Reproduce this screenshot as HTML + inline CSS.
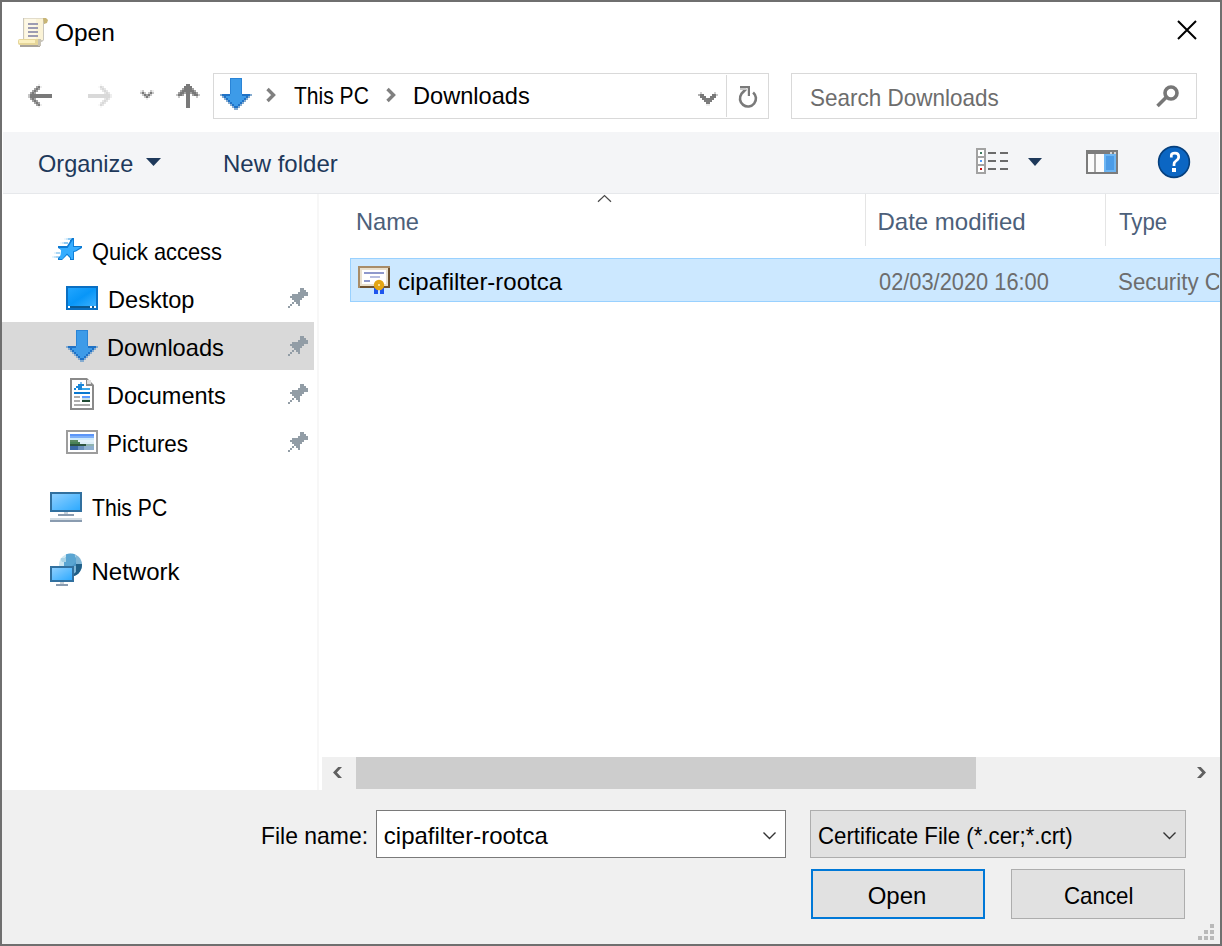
<!DOCTYPE html>
<html><head><meta charset="utf-8">
<style>
*{box-sizing:border-box}
html,body{margin:0;padding:0;width:1222px;height:946px;overflow:hidden;background:#fff}
body{position:relative;font-family:"Liberation Sans",sans-serif;font-size:24px;color:#000}
.a{position:absolute}
.t{position:absolute;white-space:nowrap;line-height:24px;font-size:24px;transform-origin:0 0}
#frame{position:absolute;left:0;top:0;width:1222px;height:946px;border:2px solid #6f6f6f;pointer-events:none}
svg{position:absolute;overflow:visible}
</style></head><body>

<!-- command bar -->
<div class="a" style="left:3px;top:132px;width:1216px;height:61px;background:#f4f5f7"></div>
<div class="a" style="left:3px;top:193px;width:1216px;height:1px;background:#e6e8eb"></div>

<!-- bottom pane -->
<div class="a" style="left:2px;top:790px;width:1218px;height:154px;background:#f0f0f0"></div>

<!-- nav pane separator -->
<div class="a" style="left:317px;top:194px;width:2px;height:596px;background:#f7f7f7"></div>

<!-- selected nav item -->
<div class="a" style="left:2px;top:322px;width:312px;height:48px;background:#d9d9d9"></div>

<!-- scrollbar -->
<div class="a" style="left:322px;top:757px;width:898px;height:33px;background:#f0f0f0"></div>
<div class="a" style="left:356px;top:757px;width:620px;height:32px;background:#cdcdcd"></div>

<!-- address box -->
<div class="a" style="left:213px;top:73px;width:556px;height:46px;border:1px solid #d9d9d9"></div>
<div class="a" style="left:726px;top:75px;width:1px;height:42px;background:#d9d9d9"></div>
<!-- search box -->
<div class="a" style="left:791px;top:73px;width:406px;height:46px;border:1px solid #d9d9d9"></div>

<!-- file row selection -->
<div class="a" style="left:350px;top:258px;width:880px;height:44px;background:#cce8ff;border:1px solid #99d1ff"></div>

<!-- column dividers -->
<div class="a" style="left:865px;top:194px;width:1px;height:52px;background:#e5e5e5"></div>
<div class="a" style="left:1105px;top:194px;width:1px;height:52px;background:#e5e5e5"></div>

<!-- bottom controls -->
<div class="a" style="left:376px;top:810px;width:410px;height:48px;background:#fff;border:1px solid #7a7a7a"></div>
<div class="a" style="left:810px;top:810px;width:376px;height:48px;background:#e1e1e1;border:1px solid #adadad"></div>
<div class="a" style="left:811px;top:869px;width:174px;height:50px;background:#e1e1e1;border:2px solid #0078d7"></div>
<div class="a" style="left:1011px;top:869px;width:174px;height:50px;background:#e1e1e1;border:1px solid #adadad"></div>

<!-- texts -->
<div class="t" style="left:54.8px;top:21px;transform:scaleX(1.018)">Open</div>
<div class="t" style="left:294.3px;top:84px;transform:scaleX(0.877)">This PC</div>
<div class="t" style="left:413.0px;top:84px;transform:scaleX(0.983)">Downloads</div>
<div class="t" style="left:810.3px;top:86px;transform:scaleX(0.937);color:#6d6d6d">Search Downloads</div>
<div class="t" style="left:37.9px;top:152px;transform:scaleX(0.980);color:#1e395b">Organize</div>
<div class="t" style="left:223.0px;top:152px;color:#1e395b">New folder</div>
<div class="t" style="left:92.0px;top:240px;transform:scaleX(0.910)">Quick access</div>
<div class="t" style="left:107.5px;top:288px;transform:scaleX(0.982)">Desktop</div>
<div class="t" style="left:106.8px;top:336px;transform:scaleX(0.984)">Downloads</div>
<div class="t" style="left:106.8px;top:384px;transform:scaleX(0.979)">Documents</div>
<div class="t" style="left:106.9px;top:432px;transform:scaleX(0.935)">Pictures</div>
<div class="t" style="left:92.4px;top:496px;transform:scaleX(0.881)">This PC</div>
<div class="t" style="left:91.5px;top:560px">Network</div>
<div class="t" style="left:356.0px;top:210px;transform:scaleX(0.984);color:#4c607a">Name</div>
<div class="t" style="left:877.5px;top:210px;color:#4c607a">Date modified</div>
<div class="t" style="left:1118.7px;top:210px;transform:scaleX(0.927);color:#4c607a">Type</div>
<div class="t" style="left:398.0px;top:270px">cipafilter-rootca</div>
<div class="t" style="left:878.6px;top:270px;transform:scaleX(0.909);color:#6d6d6d">02/03/2020 16:00</div>
<div class="a" style="left:1118px;top:258px;width:101px;height:44px;overflow:hidden"><div class="t" style="left:0px;top:12px;transform:scaleX(0.93);color:#6d6d6d">Security Certificate</div></div>
<div class="t" style="left:261.4px;top:824px;transform:scaleX(0.955)">File name:</div>
<div class="t" style="left:383.8px;top:824px">cipafilter-rootca</div>
<div class="t" style="left:817.8px;top:824px;transform:scaleX(0.927)">Certificate File (*.cer;*.crt)</div>
<div class="t" style="left:867.7px;top:884px">Open</div>
<div class="t" style="left:1063.7px;top:884px;transform:scaleX(0.929)">Cancel</div>

<!-- ICONS -->
<svg class="a" width="1222" height="946" viewBox="0 0 1222 946" style="left:0;top:0">
<defs>
<linearGradient id="scr" x1="0" y1="0" x2="1" y2="1"><stop offset="0" stop-color="#8fd0ff"/><stop offset="1" stop-color="#2eaaff"/></linearGradient>
<linearGradient id="dsk" x1="0" y1="0" x2="1" y2="1"><stop offset="0" stop-color="#22a6ff"/><stop offset="0.5" stop-color="#0896f8"/><stop offset="1" stop-color="#3ab0ff"/></linearGradient>
<linearGradient id="glb" x1="0" y1="0" x2="1" y2="0.6"><stop offset="0" stop-color="#d6eef8"/><stop offset="0.45" stop-color="#7fbde0"/><stop offset="0.6" stop-color="#3f8fc4"/><stop offset="1" stop-color="#1d5b86"/></linearGradient>
</defs>
<!-- title scroll icon -->
<g>
  <path d="M23,18 H44 L46,19 L46,22 L44,24 V40 L42,42 H23 Z" fill="#c9c6bd"/>
  <path d="M24,18.5 H43 V40 H24 Z" fill="#fbf3d6"/>
  <path d="M25,19 H36 V40 H25 Z" fill="#fdf8e6"/>
  <rect x="28" y="23" width="10" height="2" fill="#9d9cb2"/>
  <rect x="28" y="27" width="10" height="2" fill="#9d9cb2"/>
  <rect x="28" y="31" width="10" height="2" fill="#9d9cb2"/>
  <rect x="28" y="35" width="10" height="2" fill="#9d9cb2"/>
  <path d="M43,18 L46,18 L48,20 L47,23 L44,24 Z" fill="#c8b576"/>
  <rect x="18" y="39" width="22" height="6" rx="2" fill="#e6d69a"/>
  <rect x="19" y="40" width="16" height="3" fill="#fbf0c0"/>
  <rect x="20" y="45" width="20" height="2" fill="#a9a39a"/>
  <rect x="38" y="39" width="3" height="7" fill="#c7c2b5"/>
</g>
<!-- close X -->
<path d="M1178,21 L1196,39 M1196,21 L1178,39" stroke="#000" stroke-width="2" fill="none"/>
<!-- back / forward / recent / up -->
<g shape-rendering="crispEdges">
<rect x="38" y="84" width="2" height="2" fill="#ededed"/>
<rect x="36" y="86" width="2" height="2" fill="#a2a2a2"/>
<rect x="38" y="86" width="2" height="2" fill="#797979"/>
<rect x="40" y="86" width="2" height="2" fill="#ededed"/>
<rect x="34" y="88" width="2" height="2" fill="#a2a2a2"/>
<rect x="36" y="88" width="2" height="2" fill="#797979"/>
<rect x="38" y="88" width="2" height="2" fill="#a2a2a2"/>
<rect x="32" y="90" width="2" height="2" fill="#a2a2a2"/>
<rect x="34" y="90" width="2" height="2" fill="#797979"/>
<rect x="36" y="90" width="2" height="2" fill="#a2a2a2"/>
<rect x="30" y="92" width="2" height="2" fill="#a2a2a2"/>
<rect x="32" y="92" width="2" height="2" fill="#797979"/>
<rect x="34" y="92" width="2" height="2" fill="#a2a2a2"/>
<rect x="28" y="94" width="2" height="4" fill="#c6c6c6"/>
<rect x="30" y="94" width="22" height="4" fill="#797979"/>
<rect x="30" y="98" width="2" height="2" fill="#a2a2a2"/>
<rect x="32" y="98" width="2" height="2" fill="#797979"/>
<rect x="34" y="98" width="2" height="2" fill="#a2a2a2"/>
<rect x="32" y="100" width="2" height="2" fill="#a2a2a2"/>
<rect x="34" y="100" width="2" height="2" fill="#797979"/>
<rect x="36" y="100" width="2" height="2" fill="#a2a2a2"/>
<rect x="34" y="102" width="2" height="2" fill="#a2a2a2"/>
<rect x="36" y="102" width="2" height="2" fill="#797979"/>
<rect x="38" y="102" width="2" height="2" fill="#a2a2a2"/>
<rect x="36" y="104" width="2" height="2" fill="#a2a2a2"/>
<rect x="38" y="104" width="2" height="2" fill="#797979"/>
<rect x="40" y="104" width="2" height="2" fill="#ededed"/>
<rect x="38" y="106" width="2" height="2" fill="#ededed"/>
<rect x="100" y="84" width="2" height="2" fill="#f8f8f8"/>
<rect x="102" y="86" width="2" height="2" fill="#e6e6e6"/>
<rect x="100" y="86" width="2" height="2" fill="#d9d9d9"/>
<rect x="98" y="86" width="2" height="2" fill="#f8f8f8"/>
<rect x="104" y="88" width="2" height="2" fill="#e6e6e6"/>
<rect x="102" y="88" width="2" height="2" fill="#d9d9d9"/>
<rect x="100" y="88" width="2" height="2" fill="#e6e6e6"/>
<rect x="106" y="90" width="2" height="2" fill="#e6e6e6"/>
<rect x="104" y="90" width="2" height="2" fill="#d9d9d9"/>
<rect x="102" y="90" width="2" height="2" fill="#e6e6e6"/>
<rect x="108" y="92" width="2" height="2" fill="#e6e6e6"/>
<rect x="106" y="92" width="2" height="2" fill="#d9d9d9"/>
<rect x="104" y="92" width="2" height="2" fill="#e6e6e6"/>
<rect x="110" y="94" width="2" height="4" fill="#eeeeee"/>
<rect x="88" y="94" width="22" height="4" fill="#d9d9d9"/>
<rect x="108" y="98" width="2" height="2" fill="#e6e6e6"/>
<rect x="106" y="98" width="2" height="2" fill="#d9d9d9"/>
<rect x="104" y="98" width="2" height="2" fill="#e6e6e6"/>
<rect x="106" y="100" width="2" height="2" fill="#e6e6e6"/>
<rect x="104" y="100" width="2" height="2" fill="#d9d9d9"/>
<rect x="102" y="100" width="2" height="2" fill="#e6e6e6"/>
<rect x="104" y="102" width="2" height="2" fill="#e6e6e6"/>
<rect x="102" y="102" width="2" height="2" fill="#d9d9d9"/>
<rect x="100" y="102" width="2" height="2" fill="#e6e6e6"/>
<rect x="102" y="104" width="2" height="2" fill="#e6e6e6"/>
<rect x="100" y="104" width="2" height="2" fill="#d9d9d9"/>
<rect x="98" y="104" width="2" height="2" fill="#f8f8f8"/>
<rect x="100" y="106" width="2" height="2" fill="#f8f8f8"/>
<rect x="186" y="84" width="4" height="2" fill="#797979"/>
<rect x="184" y="86" width="8" height="2" fill="#797979"/>
<rect x="182" y="88" width="2" height="2" fill="#a2a2a2"/>
<rect x="184" y="88" width="8" height="2" fill="#797979"/>
<rect x="192" y="88" width="2" height="2" fill="#a2a2a2"/>
<rect x="180" y="90" width="2" height="2" fill="#a2a2a2"/>
<rect x="182" y="90" width="12" height="2" fill="#797979"/>
<rect x="194" y="90" width="2" height="2" fill="#a2a2a2"/>
<rect x="178" y="92" width="2" height="2" fill="#a2a2a2"/>
<rect x="180" y="92" width="4" height="2" fill="#797979"/>
<rect x="184" y="92" width="2" height="2" fill="#a2a2a2"/>
<rect x="186" y="92" width="4" height="2" fill="#797979"/>
<rect x="190" y="92" width="2" height="2" fill="#a2a2a2"/>
<rect x="192" y="92" width="4" height="2" fill="#797979"/>
<rect x="196" y="92" width="2" height="2" fill="#a2a2a2"/>
<rect x="176" y="94" width="2" height="2" fill="#c6c6c6"/>
<rect x="178" y="94" width="4" height="2" fill="#797979"/>
<rect x="182" y="94" width="2" height="2" fill="#a2a2a2"/>
<rect x="186" y="94" width="4" height="2" fill="#797979"/>
<rect x="192" y="94" width="2" height="2" fill="#a2a2a2"/>
<rect x="194" y="94" width="4" height="2" fill="#797979"/>
<rect x="198" y="94" width="2" height="2" fill="#c6c6c6"/>
<rect x="178" y="96" width="2" height="2" fill="#c6c6c6"/>
<rect x="186" y="96" width="4" height="12" fill="#797979"/>
<rect x="196" y="96" width="2" height="2" fill="#c6c6c6"/>
<rect x="140" y="90" width="2" height="2" fill="#ededed"/>
<rect x="142" y="90" width="2" height="2" fill="#c6c6c6"/>
<rect x="150" y="90" width="2" height="2" fill="#c6c6c6"/>
<rect x="152" y="90" width="2" height="2" fill="#ededed"/>
<rect x="140" y="92" width="2" height="2" fill="#c6c6c6"/>
<rect x="142" y="92" width="2" height="2" fill="#797979"/>
<rect x="144" y="92" width="2" height="2" fill="#c6c6c6"/>
<rect x="148" y="92" width="2" height="2" fill="#c6c6c6"/>
<rect x="150" y="92" width="2" height="2" fill="#797979"/>
<rect x="152" y="92" width="2" height="2" fill="#c6c6c6"/>
<rect x="142" y="94" width="2" height="2" fill="#c6c6c6"/>
<rect x="144" y="94" width="2" height="2" fill="#797979"/>
<rect x="146" y="94" width="2" height="2" fill="#a2a2a2"/>
<rect x="148" y="94" width="2" height="2" fill="#797979"/>
<rect x="150" y="94" width="2" height="2" fill="#c6c6c6"/>
<rect x="144" y="96" width="2" height="2" fill="#c6c6c6"/>
<rect x="146" y="96" width="2" height="2" fill="#797979"/>
<rect x="148" y="96" width="2" height="2" fill="#c6c6c6"/>
<rect x="146" y="98" width="2" height="2" fill="#ededed"/>
</g>
<!-- download arrow (address) -->
<g shape-rendering="crispEdges"><rect x="230" y="78" width="12" height="16" fill="#2a84d6"/><rect x="231" y="79" width="10" height="15" fill="#3d9be8"/><rect x="220" y="94" width="2" height="2" fill="#86acd0"/><rect x="222" y="94" width="28" height="2" fill="#1f72c6"/><rect x="250" y="94" width="2" height="2" fill="#86acd0"/><rect x="230" y="94" width="12" height="2" fill="#3d9be8"/><rect x="222" y="96" width="2" height="2" fill="#86acd0"/><rect x="224" y="96" width="2" height="2" fill="#1f72c6"/><rect x="226" y="96" width="20" height="2" fill="#3d9be8"/><rect x="246" y="96" width="2" height="2" fill="#1f72c6"/><rect x="248" y="96" width="2" height="2" fill="#86acd0"/><rect x="224" y="98" width="2" height="2" fill="#86acd0"/><rect x="226" y="98" width="2" height="2" fill="#1f72c6"/><rect x="228" y="98" width="16" height="2" fill="#3d9be8"/><rect x="244" y="98" width="2" height="2" fill="#1f72c6"/><rect x="246" y="98" width="2" height="2" fill="#86acd0"/><rect x="226" y="100" width="2" height="2" fill="#86acd0"/><rect x="228" y="100" width="2" height="2" fill="#1f72c6"/><rect x="230" y="100" width="12" height="2" fill="#3d9be8"/><rect x="242" y="100" width="2" height="2" fill="#1f72c6"/><rect x="244" y="100" width="2" height="2" fill="#86acd0"/><rect x="228" y="102" width="2" height="2" fill="#86acd0"/><rect x="230" y="102" width="2" height="2" fill="#1f72c6"/><rect x="232" y="102" width="8" height="2" fill="#3d9be8"/><rect x="240" y="102" width="2" height="2" fill="#1f72c6"/><rect x="242" y="102" width="2" height="2" fill="#86acd0"/><rect x="230" y="104" width="2" height="2" fill="#86acd0"/><rect x="232" y="104" width="2" height="2" fill="#1f72c6"/><rect x="234" y="104" width="4" height="2" fill="#3d9be8"/><rect x="238" y="104" width="2" height="2" fill="#1f72c6"/><rect x="240" y="104" width="2" height="2" fill="#86acd0"/><rect x="232" y="106" width="2" height="2" fill="#86acd0"/><rect x="234" y="106" width="4" height="2" fill="#1f72c6"/><rect x="238" y="106" width="2" height="2" fill="#86acd0"/><rect x="234" y="108" width="4" height="2" fill="#86acd0"/></g>
<!-- breadcrumb chevrons -->
<g fill="none" stroke="#808080" stroke-width="3.4">
  <path d="M267.5,89 L273.5,95 L267.5,101"/>
  <path d="M387.5,89 L393.5,95 L387.5,101"/>
</g>
<!-- address dropdown + refresh -->
<g shape-rendering="crispEdges"><rect x="700" y="92" width="2" height="2" fill="#d0d0d0"/><rect x="714" y="92" width="2" height="2" fill="#d0d0d0"/><rect x="698" y="94" width="2" height="2" fill="#b0b0b0"/><rect x="700" y="94" width="4" height="2" fill="#787878"/><rect x="712" y="94" width="4" height="2" fill="#787878"/><rect x="716" y="94" width="2" height="2" fill="#c8c8c8"/><rect x="700" y="96" width="6" height="2" fill="#787878"/><rect x="710" y="96" width="6" height="2" fill="#787878"/><rect x="702" y="98" width="12" height="2" fill="#7c7c7c"/><rect x="704" y="100" width="8" height="2" fill="#7c7c7c"/><rect x="706" y="102" width="4" height="2" fill="#7c7c7c"/><rect x="706" y="104" width="4" height="2" fill="#ececec"/></g>
<path d="M753.1,92.4 A8,8 0 1 1 741.4,93.9 L746,89" fill="none" stroke="#7a7a7a" stroke-width="2.6"/>
<rect x="740" y="86" width="10" height="2.2" fill="#7a7a7a"/>
<rect x="747.8" y="86" width="2.2" height="10" fill="#7a7a7a"/>
<rect x="740" y="88" width="6" height="2" fill="#c8c8c8"/>
<!-- magnifier -->
<circle cx="1171" cy="93" r="6" fill="none" stroke="#777" stroke-width="3.6"/>
<path d="M1157.5,106 L1166,97.5" stroke="#777" stroke-width="3.6"/>
<!-- command bar -->
<path d="M146,158 H161 L153.5,166 Z" fill="#1e395b"/>
<rect x="976" y="148" width="10" height="26" fill="#a2a2a2"/>
<rect x="978" y="150" width="6" height="6" fill="#fff"/>
<rect x="978" y="158" width="6" height="6" fill="#fff"/>
<rect x="978" y="166" width="6" height="6" fill="#fff"/>
<rect x="980" y="152" width="2" height="2" fill="#3e7a5f"/>
<rect x="980" y="160" width="2" height="2" fill="#4d9bff"/>
<rect x="980" y="168" width="2" height="2" fill="#cc1010"/>
<g fill="#6b6b6b">
  <rect x="988" y="152" width="8" height="2"/><rect x="1000" y="152" width="8" height="2"/>
  <rect x="988" y="160" width="8" height="2"/><rect x="1000" y="160" width="8" height="2"/>
  <rect x="988" y="168" width="8" height="2"/><rect x="1000" y="168" width="8" height="2"/>
</g>
<path d="M1028,158 H1042 L1035,166 Z" fill="#1e395b"/>
<rect x="1086" y="150" width="32" height="24" fill="#7c7c7c"/>
<rect x="1088" y="154" width="6" height="18" fill="#fbfbfb"/>
<rect x="1094" y="154" width="2" height="18" fill="#a9a9a9"/>
<rect x="1096" y="154" width="8" height="18" fill="#fbfbfb"/>
<rect x="1104" y="154" width="12" height="18" fill="#6db5f2"/>
<rect x="1106" y="156" width="8" height="14" fill="#4b9be6"/>
<rect x="1110" y="152" width="2" height="2" fill="#d4d4d4"/>
<rect x="1114" y="152" width="2" height="2" fill="#d4d4d4"/>
<circle cx="1174" cy="162" r="15.4" fill="#0b66c3" stroke="#06407e" stroke-width="1.6"/>
<path d="M1171.3,157.5 V155.5 Q1171.3,153.2 1175,153.2 Q1178.7,153.2 1178.7,156.8 Q1178.7,159.2 1176.3,160.6 Q1174,162 1174,164.5 V166" fill="none" stroke="#fff" stroke-width="2.7"/>
<rect x="1172" y="168" width="4" height="4" fill="#fff"/>
<!-- nav pane: star -->
<g shape-rendering="crispEdges">
  <rect x="64" y="238" width="2" height="2" fill="#eef7fd"/><rect x="66" y="238" width="2" height="2" fill="#cfe8f9"/><rect x="68" y="238" width="4" height="2" fill="#8ec9f2"/>
  <rect x="70" y="240" width="2" height="2" fill="#0f7fd6"/>
  <rect x="60" y="242" width="2" height="2" fill="#eef7fd"/><rect x="62" y="242" width="2" height="2" fill="#cfe8f9"/><rect x="64" y="242" width="4" height="2" fill="#8ec9f2"/>
  <rect x="54" y="252" width="2" height="2" fill="#e6f3fc"/><rect x="56" y="252" width="4" height="2" fill="#a9d6f5"/>
  <rect x="52" y="256" width="2" height="2" fill="#e6f3fc"/><rect x="54" y="256" width="2" height="2" fill="#c6e4f8"/><rect x="56" y="256" width="4" height="2" fill="#a9d6f5"/>
</g>
<path d="M72,238 H74 V246 H82 V248 L76,251.5 L74,252 V260 H70 V258 L67,255 L62,260 H58 V258 L61.5,255 L62,250 L58,248 V246 H67 Z" fill="#0c7bd4"/>
<path d="M72.6,240 L73.1,240 V247 H80.6 L75.8,250.6 L73.1,251.3 V259 H71 V257.6 L67,253.6 L62.3,259 H59.2 L60.6,254.8 L61.1,250.4 L59.5,247.9 H67.6 Z" fill="#36adff"/>
<!-- desktop -->
<rect x="66" y="286" width="32" height="24" fill="#0a6fc2"/>
<rect x="68" y="288" width="28" height="18" fill="url(#dsk)"/>
<rect x="68" y="306" width="28" height="2" fill="#0b5a94"/>
<rect x="68" y="306" width="2" height="2" fill="#fff"/>
<rect x="90" y="306" width="2" height="2" fill="#fff"/>
<rect x="94" y="306" width="2" height="2" fill="#fff"/>
<!-- downloads nav -->
<g shape-rendering="crispEdges"><rect x="76" y="330" width="12" height="16" fill="#2a84d6"/><rect x="77" y="331" width="10" height="15" fill="#3d9be8"/><rect x="66" y="346" width="2" height="2" fill="#86acd0"/><rect x="68" y="346" width="28" height="2" fill="#1f72c6"/><rect x="96" y="346" width="2" height="2" fill="#86acd0"/><rect x="76" y="346" width="12" height="2" fill="#3d9be8"/><rect x="68" y="348" width="2" height="2" fill="#86acd0"/><rect x="70" y="348" width="2" height="2" fill="#1f72c6"/><rect x="72" y="348" width="20" height="2" fill="#3d9be8"/><rect x="92" y="348" width="2" height="2" fill="#1f72c6"/><rect x="94" y="348" width="2" height="2" fill="#86acd0"/><rect x="70" y="350" width="2" height="2" fill="#86acd0"/><rect x="72" y="350" width="2" height="2" fill="#1f72c6"/><rect x="74" y="350" width="16" height="2" fill="#3d9be8"/><rect x="90" y="350" width="2" height="2" fill="#1f72c6"/><rect x="92" y="350" width="2" height="2" fill="#86acd0"/><rect x="72" y="352" width="2" height="2" fill="#86acd0"/><rect x="74" y="352" width="2" height="2" fill="#1f72c6"/><rect x="76" y="352" width="12" height="2" fill="#3d9be8"/><rect x="88" y="352" width="2" height="2" fill="#1f72c6"/><rect x="90" y="352" width="2" height="2" fill="#86acd0"/><rect x="74" y="354" width="2" height="2" fill="#86acd0"/><rect x="76" y="354" width="2" height="2" fill="#1f72c6"/><rect x="78" y="354" width="8" height="2" fill="#3d9be8"/><rect x="86" y="354" width="2" height="2" fill="#1f72c6"/><rect x="88" y="354" width="2" height="2" fill="#86acd0"/><rect x="76" y="356" width="2" height="2" fill="#86acd0"/><rect x="78" y="356" width="2" height="2" fill="#1f72c6"/><rect x="80" y="356" width="4" height="2" fill="#3d9be8"/><rect x="84" y="356" width="2" height="2" fill="#1f72c6"/><rect x="86" y="356" width="2" height="2" fill="#86acd0"/><rect x="78" y="358" width="2" height="2" fill="#86acd0"/><rect x="80" y="358" width="4" height="2" fill="#1f72c6"/><rect x="84" y="358" width="2" height="2" fill="#86acd0"/><rect x="80" y="360" width="4" height="2" fill="#86acd0"/></g>
<!-- documents -->
<path d="M70,378 H87 L94,385 V410 H70 Z" fill="#8a8a8a"/>
<path d="M72,380 H86 V386 H92 V408 H72 Z" fill="#fff"/>
<rect x="87" y="380" width="4" height="4" fill="#dcdcdc"/>
<rect x="80" y="382" width="2" height="2" fill="#7ec0f0"/>
<rect x="78" y="384" width="4" height="2" fill="#1a86d8"/>
<rect x="82" y="384" width="2" height="2" fill="#1a86d8"/>
<rect x="76" y="386" width="4" height="2" fill="#1a86d8"/>
<rect x="78" y="386" width="4" height="4" fill="#1a86d8"/>
<rect x="74" y="388" width="2" height="2" fill="#1a86d8"/>
<rect x="82" y="388" width="8" height="2" fill="#38a6ea"/>
<rect x="74" y="392" width="16" height="2" fill="#0a78d0"/>
<rect x="74" y="396" width="6" height="2" fill="#acacac"/>
<rect x="74" y="400" width="6" height="2" fill="#acacac"/>
<rect x="82" y="396" width="8" height="2" fill="#5c9bff"/>
<rect x="82" y="398" width="8" height="2" fill="#c8e0e8"/>
<rect x="82" y="400" width="8" height="2" fill="#1f4a33"/>
<rect x="74" y="404" width="16" height="2" fill="#acacac"/>
<!-- pictures -->
<rect x="66" y="430" width="32" height="24" fill="#9d9d9d"/>
<rect x="68" y="432" width="28" height="20" fill="#fff"/>
<rect x="70" y="434" width="24" height="2" fill="#5b95f8"/>
<rect x="70" y="436" width="24" height="2" fill="#7db0f8"/>
<rect x="70" y="438" width="24" height="2" fill="#cfeafb"/>
<rect x="70" y="440" width="24" height="2" fill="#e3f2fb"/>
<rect x="70" y="440" width="8" height="2" fill="#5b8a62"/>
<rect x="70" y="442" width="24" height="2" fill="#dcedf8"/>
<rect x="70" y="442" width="10" height="2" fill="#4a8257"/>
<rect x="70" y="444" width="16" height="2" fill="#2e5540"/>
<rect x="86" y="444" width="8" height="2" fill="#8fb3b0"/>
<rect x="70" y="446" width="24" height="4" fill="#8fb0cf"/>
<rect x="70" y="446" width="8" height="4" fill="#3b69a6"/>
<rect x="78" y="446" width="6" height="4" fill="#6a90bd"/>
<!-- pins -->
<defs>
<g id="pin" fill="#929da6">
  <rect x="300" y="288" width="4" height="2"/>
  <rect x="300" y="290" width="6" height="2"/>
  <rect x="298" y="292" width="10" height="2"/>
  <rect x="292" y="294" width="16" height="2" />
  <rect x="290" y="296" width="14" height="2"/>
  <rect x="292" y="298" width="10" height="2"/>
  <rect x="294" y="300" width="6" height="2"/>
  <rect x="292" y="302" width="2" height="2"/>
  <rect x="296" y="302" width="4" height="2"/>
  <rect x="290" y="304" width="2" height="2"/>
  <rect x="298" y="304" width="2" height="2"/>
  <rect x="288" y="306" width="2" height="2"/>
</g>
</defs>
<use href="#pin"/>
<use href="#pin" y="48"/>
<use href="#pin" y="96"/>
<use href="#pin" y="144"/>
<!-- this pc -->
<rect x="50" y="492" width="32" height="20" fill="#31709f"/>
<rect x="52" y="494" width="28" height="16" fill="url(#scr)"/>
<rect x="64" y="512" width="4" height="2" fill="#c8d2da"/>
<rect x="58" y="514" width="16" height="2" fill="#8a9cb0"/>
<rect x="50" y="518" width="32" height="2" fill="#d3dce2"/>
<rect x="50" y="520" width="32" height="2" fill="#8a9cb0"/>
<!-- network -->
<clipPath id="gclip"><circle cx="70.5" cy="565" r="11.5"/></clipPath>
<g clip-path="url(#gclip)">
<rect x="58" y="553" width="26" height="24" fill="#cde7f1"/>
<path d="M66,553 H74 L76,558 V566 H64 V560 L66,557 Z" fill="#5aa5d2"/>
<path d="M60,558 H66 V562 H62 Z" fill="#a9d3e6"/>
<path d="M72,553 H84 V577 H72 V566 L76,562 V556 Z" fill="#3f8dc0" opacity="0.55"/>
<path d="M76,564 H84 V577 H70 L76,572 Z" fill="#1f5f88"/>
</g>
<rect x="50" y="566" width="24" height="16" fill="#31709f"/>
<rect x="52" y="568" width="20" height="12" fill="url(#scr)"/>
<rect x="60" y="582" width="4" height="2" fill="#c8d2da"/>
<rect x="56" y="584" width="12" height="2" fill="#8a9cb0"/>
<!-- sort chevron -->
<path d="M598,201.8 L604.5,195.6 L611,201.8" fill="none" stroke="#4a4a4a" stroke-width="1.25"/>
<!-- certificate icon -->
<rect x="358" y="266" width="32" height="22" fill="#6e5230"/>
<path d="M358,266 H390 V268 H360 V288 H358 Z" fill="#a88c68"/>
<rect x="360" y="268" width="28" height="18" fill="#e9e0ce"/>
<rect x="362" y="270" width="24" height="14" fill="#fff"/>
<rect x="364" y="272" width="20" height="2" fill="#8e98cc"/>
<rect x="370" y="276" width="10" height="2" fill="#b6bde0"/>
<rect x="364" y="280" width="6" height="2" fill="#8e98cc"/>
<rect x="374" y="288" width="4" height="6" fill="#1f55ee"/>
<rect x="380" y="288" width="4" height="6" fill="#1f55ee"/>
<circle cx="379" cy="285" r="5.2" fill="#e3a514"/>
<rect x="378" y="284" width="2" height="2" fill="#ffe08a"/>
<!-- scroll arrows -->
<path d="M338.2,767 H342 L336.9,772.5 L342,778 H338.2 L333,772.5 Z" fill="#606060"/>
<path d="M1200.8,767 H1197 L1202.1,772.5 L1197,778 H1200.8 L1206,772.5 Z" fill="#606060"/>
<!-- combo chevrons -->
<path d="M763.5,832.5 L769.5,838.5 L775.5,832.5" fill="none" stroke="#333" stroke-width="1.4"/>
<path d="M1163.5,832.5 L1169.5,838.5 L1175.5,832.5" fill="none" stroke="#333" stroke-width="1.4"/>
<!-- grip -->
<g fill="#b9b9b9">
  <rect x="1210" y="924" width="4" height="4"/>
  <rect x="1204" y="930" width="4" height="4"/><rect x="1210" y="930" width="4" height="4"/>
  <rect x="1198" y="936" width="4" height="4"/><rect x="1204" y="936" width="4" height="4"/><rect x="1210" y="936" width="4" height="4"/>
</g>
</svg>
<!-- /ICONS -->
<div id="frame"></div>
</body></html>
